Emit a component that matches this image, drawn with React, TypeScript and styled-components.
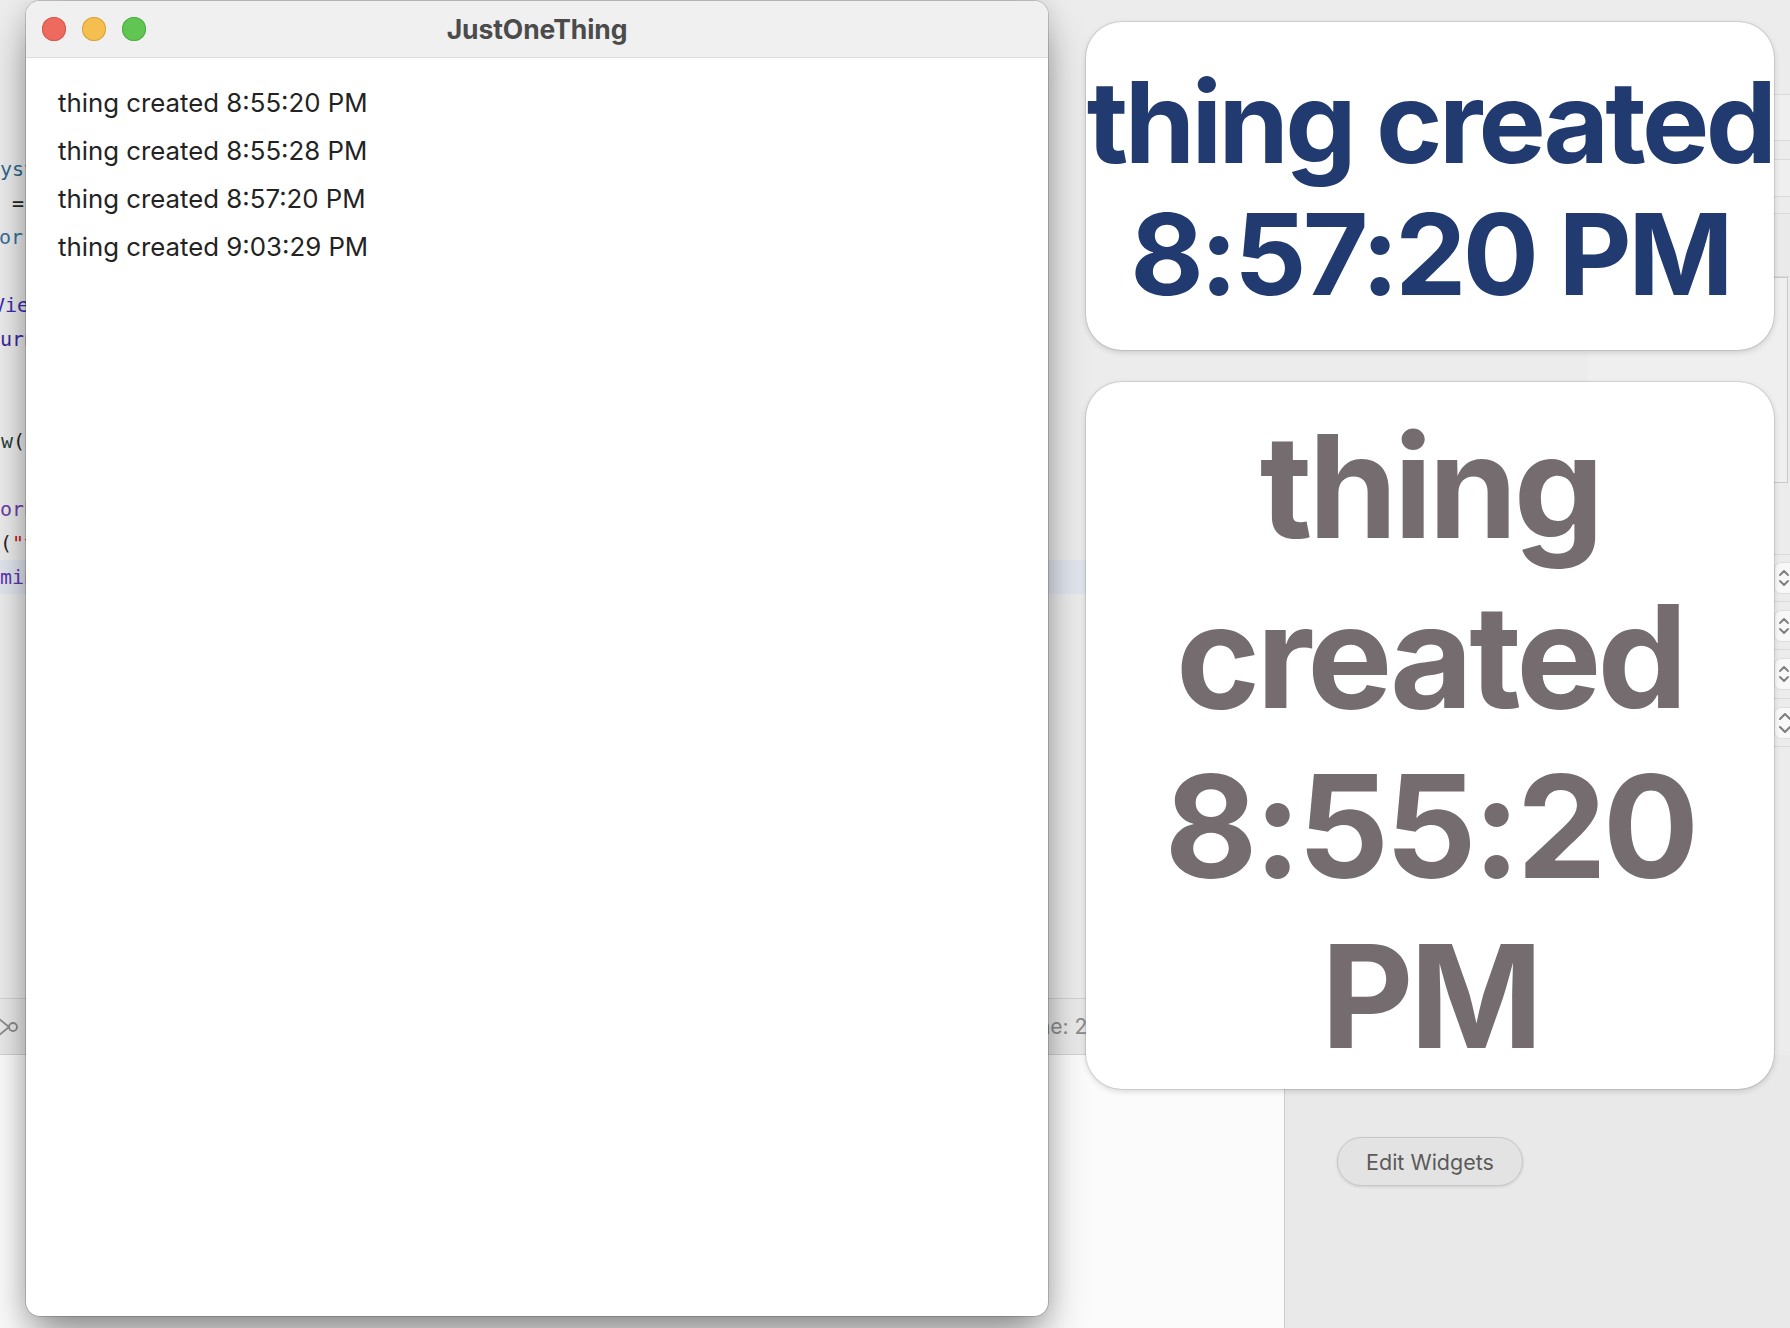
import React from "react";
import styled, { createGlobalStyle } from "styled-components";

const GlobalStyle = createGlobalStyle`
  html, body {
    margin: 0;
    padding: 0;
    width: 1790px;
    height: 1328px;
    overflow: hidden;
    background: #e9e9e9;
  }
  * { box-sizing: border-box; }
  #root { width: 1790px; height: 1328px; }
`;

const Screen = styled.div`
  position: relative;
  width: 1790px;
  height: 1328px;
  overflow: hidden;
  font-family: Inter, "Noto Sans", sans-serif;
`;

/* ---------- Backdrop: the Xcode window behind ---------- */

const Backdrop = styled.div`
  display: grid;
  grid-template-columns: 1284px 1fr;
  grid-template-rows: 998px 57px 1fr;
  width: 100%;
  height: 100%;
`;

const CodePane = styled.div`
  grid-column: 1;
  grid-row: 1;
  background: #ececec;
  padding-top: 152px;
  font-family: "DejaVu Sans Mono", "Liberation Mono", monospace;
  font-size: 20px;
  line-height: 34px;
  overflow: hidden;
`;

const CodeLine = styled.div<{ $active?: boolean; $shift?: number }>`
  height: 34px;
  white-space: pre;
  color: #262626;
  text-indent: ${(p) => p.$shift ?? 0}px;
  background: ${(p) => (p.$active ? "#e1e6ee" : "transparent")};
`;

const Tok = styled.span<{ $c: string }>`
  color: ${(p) => p.$c};
`;

const DebugBar = styled.div`
  grid-column: 1;
  grid-row: 2;
  display: flex;
  align-items: center;
  background: #e9e9e9;
  border-top: 1px solid #d2d2d2;
  border-bottom: 1px solid #d2d2d2;
`;

const StatusText = styled.span`
  margin-left: 1001px;
  font-size: 21px;
  color: #8d8d8d;
  white-space: nowrap;
`;

const Inspector = styled.div`
  grid-column: 2;
  grid-row: 1 / 3;
  display: flex;
  flex-direction: column;
  background: #ececec;
  overflow: hidden;
`;

const InspectorRow = styled.div<{ $h: number; $shade?: string }>`
  flex: none;
  height: ${(p) => p.$h}px;
  border-bottom: 1px solid #dadada;
  background: ${(p) => p.$shade ?? "transparent"};
  display: flex;
  align-items: center;
  justify-content: flex-end;
`;

const InspectorField = styled.div`
  flex: none;
  align-self: flex-end;
  width: 200px;
  height: 206px;
  margin: 0 2px 17px 0;
  border: 1px solid #c9c9c9;
  border-left-color: transparent;
  background: #efefef;
`;

const Stepper = styled.div`
  width: 30px;
  height: 32px;
  margin-right: -14px;
  border-radius: 7px;
  background: #f8f8f8;
  border: 1px solid #dedede;
  display: flex;
  align-items: center;
  padding-left: 3px;
`;

const ConsoleLeft = styled.div`
  grid-column: 1;
  grid-row: 3;
  background: #fbfbfb;
`;

const ConsoleRight = styled.div`
  grid-column: 2;
  grid-row: 3;
  background: #e9e9e9;
  border-left: 1px solid #cdcdcd;
`;

/* ---------- App window ---------- */

const AppWindow = styled.div`
  position: absolute;
  left: 26px;
  top: 1px;
  width: 1022px;
  height: 1315px;
  border-radius: 14px;
  background: #ffffff;
  overflow: hidden;
  box-shadow: 0 0 0 1px rgba(0, 0, 0, 0.16), 0 26px 44px -6px rgba(0, 0, 0, 0.42),
    0 0 24px rgba(0, 0, 0, 0.12);
  display: flex;
  flex-direction: column;
`;

const TitleBar = styled.div`
  flex: none;
  height: 57px;
  background: #f0f0f0;
  border-bottom: 1px solid #dddddd;
  display: grid;
  grid-template-columns: 1fr auto 1fr;
  align-items: center;
  padding: 0 16px;
`;

const Lights = styled.div`
  display: flex;
  gap: 16px;
  align-items: center;
`;

const Light = styled.span<{ $fill: string; $edge: string }>`
  width: 24px;
  height: 24px;
  border-radius: 50%;
  background: ${(p) => p.$fill};
  box-shadow: inset 0 0 0 1px ${(p) => p.$edge};
`;

const Title = styled.div`
  font-size: 26.5px;
  font-weight: 700;
  color: #4b4b4b;
  letter-spacing: -0.1px;
`;

const ThingList = styled.div`
  flex: 1;
  padding: 21px 0 0 32px;
  display: flex;
  flex-direction: column;
`;

const ThingRow = styled.div`
  height: 48px;
  line-height: 48px;
  font-size: 25.8px;
  color: #232323;
  white-space: nowrap;
`;

/* ---------- Widgets ---------- */

const WidgetStack = styled.div`
  position: absolute;
  left: 1086px;
  top: 22px;
  width: 688px;
  display: flex;
  flex-direction: column;
  align-items: center;
  gap: 32px;
`;

const Widget = styled.div<{ $h: number; $pad: number }>`
  width: 100%;
  height: ${(p) => p.$h}px;
  padding-top: ${(p) => p.$pad}px;
  border-radius: 36px;
  background: #ffffff;
  box-shadow: 0 0 0 1px rgba(0, 0, 0, 0.09), 0 2px 6px rgba(0, 0, 0, 0.16);
  display: flex;
  flex-direction: column;
  align-items: center;
  justify-content: center;
`;

const WidgetLine = styled.div<{ $size: number; $lh: number; $color: string; $track: number }>`
  font-size: ${(p) => p.$size}px;
  line-height: ${(p) => p.$lh}px;
  font-weight: 700;
  color: ${(p) => p.$color};
  letter-spacing: ${(p) => p.$track}em;
  white-space: nowrap;
  text-align: center;
`;

const EditButton = styled.button`
  margin-top: 16px;
  width: 186px;
  height: 49px;
  border-radius: 25px;
  border: 1px solid #c8c8c8;
  background: #e3e3e3;
  box-shadow: 0 1px 3px rgba(0, 0, 0, 0.12);
  font-family: Inter, "Noto Sans", sans-serif;
  font-size: 21.5px;
  color: #5b5b5b;
  padding: 0;
`;

const things = [
  "thing created 8:55:20 PM",
  "thing created 8:55:28 PM",
  "thing created 8:57:20 PM",
  "thing created 9:03:29 PM",
];

type Token = { t: string; c: string };
type Line = { toks: Token[]; shift?: number; active?: boolean };

const code: Line[] = [
  { toks: [{ t: "ystemImage", c: "#2f6a8f" }, { t: ": \"list.bullet\")", c: "#262626" }] },
  { toks: [{ t: " = Date()", c: "#262626" }] },
  { toks: [{ t: "or", c: "#3a7098" }, { t: " .blue)", c: "#262626" }], shift: -1 },
  { toks: [] },
  { toks: [{ t: "View {", c: "#3b2cb3" }], shift: -7 },
  { toks: [{ t: "urn things.last", c: "#3a2aa0" }] },
  { toks: [] },
  { toks: [] },
  { toks: [{ t: "w", c: "#27403f" }, { t: "( alignment: .leading) {", c: "#262626" }], shift: 1 },
  { toks: [] },
  { toks: [{ t: "orEach", c: "#6b40a8" }, { t: "(things) { thing in", c: "#262626" }] },
  { toks: [{ t: "(", c: "#262626" }, { t: "\"thing created\"", c: "#c41a16" }, { t: ")", c: "#262626" }] },
  { toks: [{ t: "minimumScaleFactor", c: "#5b37b1" }, { t: "(0.2)", c: "#262626" }], active: true },
];

const ShareIcon = () => (
  <svg width="20" height="24" viewBox="0 0 20 24" fill="none">
    <path d="M-2 3 L9 12 M-2 21 L9 12" stroke="#8b8b8b" strokeWidth="1.8" />
    <circle cx="13" cy="12" r="4" stroke="#8b8b8b" strokeWidth="1.8" fill="#e9e9e9" />
  </svg>
);

const Chevrons = ({ big }: { big?: boolean }) =>
  big ? (
    <svg width="14" height="26" viewBox="0 0 14 26" fill="none">
      <path d="M2 9 L7 4 L12 9" stroke="#7d7d7d" strokeWidth="2" strokeLinecap="round" strokeLinejoin="round" />
      <path d="M2 17 L7 22 L12 17" stroke="#7d7d7d" strokeWidth="2" strokeLinecap="round" strokeLinejoin="round" />
    </svg>
  ) : (
    <svg width="12" height="18" viewBox="0 0 12 18" fill="none">
      <path d="M2 6 L6 2 L10 6" stroke="#7d7d7d" strokeWidth="1.8" strokeLinecap="round" strokeLinejoin="round" />
      <path d="M2 12 L6 16 L10 12" stroke="#7d7d7d" strokeWidth="1.8" strokeLinecap="round" strokeLinejoin="round" />
    </svg>
  );

export default function App() {
  return (
    <>
      <GlobalStyle />
      <Screen>
        <Backdrop>
          <CodePane>
            {code.map((l, i) => (
              <CodeLine key={i} $shift={l.shift} $active={l.active}>
                {l.toks.map((tk, j) => (
                  <Tok key={j} $c={tk.c}>
                    {tk.t}
                  </Tok>
                ))}
              </CodeLine>
            ))}
          </CodePane>
          <DebugBar>
            <ShareIcon />
            <StatusText>Line: 24</StatusText>
          </DebugBar>
          <Inspector>
            <InspectorRow $h={95} />
            <InspectorRow $h={46} $shade="#efefef" />
            <InspectorRow $h={19} />
            <InspectorRow $h={37} $shade="#efefef" />
            <InspectorRow $h={17} />
            <InspectorRow $h={63} $shade="#eaeaea" />
            <InspectorField />
            <InspectorRow $h={55} />
            <InspectorRow $h={47}>
              <Stepper>
                <Chevrons />
              </Stepper>
            </InspectorRow>
            <InspectorRow $h={48}>
              <Stepper>
                <Chevrons />
              </Stepper>
            </InspectorRow>
            <InspectorRow $h={49}>
              <Stepper>
                <Chevrons />
              </Stepper>
            </InspectorRow>
            <InspectorRow $h={48}>
              <Stepper>
                <Chevrons big />
              </Stepper>
            </InspectorRow>
          </Inspector>
          <ConsoleLeft />
          <ConsoleRight />
        </Backdrop>

        <AppWindow>
          <TitleBar>
            <Lights>
              <Light $fill="#ee6a5e" $edge="#d4584d" />
              <Light $fill="#f5bf4f" $edge="#d9a13f" />
              <Light $fill="#61c554" $edge="#4fae44" />
            </Lights>
            <Title>JustOneThing</Title>
            <span />
          </TitleBar>
          <ThingList>
            {things.map((t) => (
              <ThingRow key={t}>{t}</ThingRow>
            ))}
          </ThingList>
        </AppWindow>

        <WidgetStack>
          <Widget $h={328} $pad={4}>
            <WidgetLine $size={113} $lh={132} $color="#213a6f" $track={-0.032}>
              thing created
            </WidgetLine>
            <WidgetLine $size={113} $lh={132} $color="#213a6f" $track={-0.032}>
              8:57:20 PM
            </WidgetLine>
          </Widget>
          <Widget $h={707} $pad={10}>
            {["thing", "created", "8:55:20", "PM"].map((w) => (
              <WidgetLine key={w} $size={143} $lh={170} $color="#756c6f" $track={-0.027}>
                {w}
              </WidgetLine>
            ))}
          </Widget>
          <EditButton>Edit Widgets</EditButton>
        </WidgetStack>
      </Screen>
    </>
  );
}
